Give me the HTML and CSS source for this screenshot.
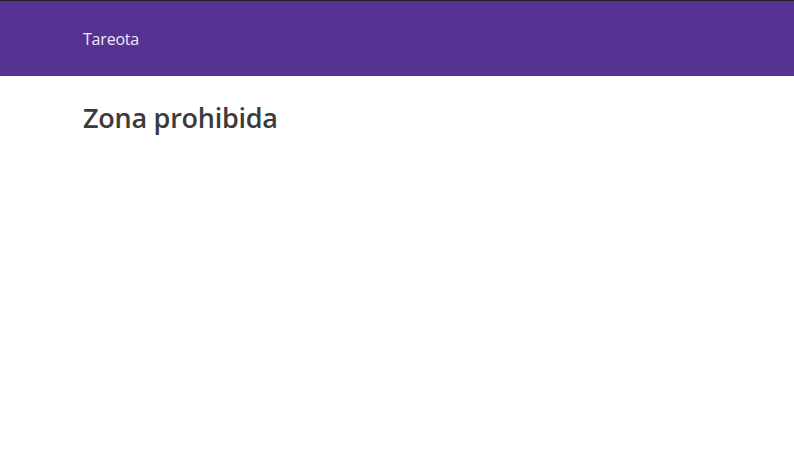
FILE: index.html
```html
<!DOCTYPE html>
<html lang="es">
<head>
<meta charset="utf-8">
<title>Tareota</title>
<link rel="stylesheet" href="styles.css">
</head>
<body>
<header class="navbar">
  <div class="container">
    <a class="brand" href="#">Tareota</a>
  </div>
</header>
<main class="container">
  <h1 class="title">Zona prohibida</h1>
</main>
</body>
</html>
```

FILE: styles.css
```css
html, body {
  margin: 0;
  padding: 0;
  background: #fff;
  font-family: "Open Sans", "Noto Sans", sans-serif;
}
.navbar {
  border-top: 1px solid #1e1e1e;
  background: #563293;
  height: 75px;
  display: flex;
  align-items: center;
}
.container {
  padding: 0 83px;
}
.brand {
  color: #f0eaf8;
  text-decoration: none;
  font-size: 16px;
  letter-spacing: -0.2px;
  display: block;
  margin-top: 0;
}
.title {
  margin: 23px 0 0;
  font-size: 27px;
  font-weight: 600;
  color: #3b3b3b;
  letter-spacing: -0.25px;
}
```
